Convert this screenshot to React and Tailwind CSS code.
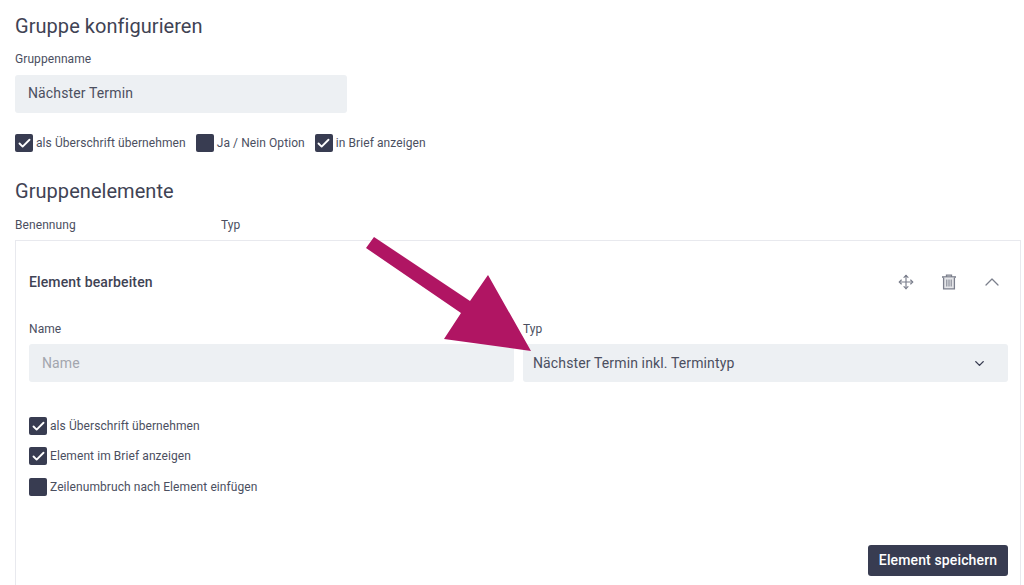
import React from "react";
import { Move, ChevronUp, ChevronDown, Check } from "lucide-react";

const Checkbox = ({ label, checked, className }) => (
  <label className={`flex items-center gap-[3px] ${className || ""}`}>
    <span className="flex h-[18px] w-[18px] items-center justify-center rounded-[2px] bg-[#383c51]">
      {checked && <Check className="h-[15px] w-[15px] text-white" strokeWidth={3} />}
    </span>
    <span className="text-[12px] leading-[18px] tracking-[0.08px] text-[#4b4f5f]">{label}</span>
  </label>
);

const TrashIcon = () => (
  <svg className="h-[18px] w-[18px]" viewBox="0 0 18 18" fill="none" stroke="currentColor" strokeWidth="1.3">
    <path d="M2 4h14" strokeWidth="1.6" />
    <path d="M6.5 4V2.2h5V4" />
    <path d="M3.6 4.5v11.3h10.8V4.5" fill="#e4e5e8" />
    <path d="M6.8 6.5v7M9 6.5v7M11.2 6.5v7" strokeWidth="1" />
  </svg>
);

const App = () => {
  return (
    <div
      className="relative h-[585px] w-[1024px] overflow-hidden bg-white pl-[15px] pr-[3px] pt-[14px] text-[#3f4354]"
      style={{ fontFamily: "Roboto, sans-serif" }}
    >
      <h2 className="text-[20px] leading-[24px] tracking-[0.05px] text-[#3f4354]">Gruppe konfigurieren</h2>
      <div className="mt-[13px] text-[12px] leading-[16px] tracking-[0.08px] text-[#4b4f5f]">Gruppenname</div>
      <div className="mt-[8px] flex h-[38px] w-[332px] items-center rounded-[3px] bg-[#edf0f3] px-[13px] pb-[1px] text-[14px] tracking-[0.13px] text-[#4b4f5f]">
        Nächster Termin
      </div>

      <div className="mt-[21px] flex gap-[10px]">
        <Checkbox label="als Überschrift übernehmen" checked />
        <Checkbox label="Ja / Nein Option" />
        <Checkbox label="in Brief anzeigen" checked />
      </div>

      <h2 className="mt-[27px] text-[20px] leading-[24px] tracking-[0.05px] text-[#3f4354]">Gruppenelemente</h2>
      <div className="mt-[14px] flex text-[12px] leading-[16px] tracking-[0.08px] text-[#4b4f5f]">
        <span className="w-[206px]">Benennung</span>
        <span>Typ</span>
      </div>

      <div className="mt-[7px] h-[400px] border border-[#e8e9ee] pl-[13px] pr-[12px]">
        {/* Card header */}
        <div className="flex h-[81px] items-center justify-between pt-[1px]">
          <h3 className="text-[14px] font-medium tracking-[0.13px] text-[#3f4354]">Element bearbeiten</h3>
          <div className="mr-[4px] flex items-center gap-[19px] text-[#7b7f8c]">
            <span className="flex w-[24px] justify-center">
              <Move className="h-[16px] w-[16px]" strokeWidth={1.75} />
            </span>
            <span className="flex w-[24px] justify-center">
              <TrashIcon />
            </span>
            <ChevronUp className="h-[24px] w-[24px]" strokeWidth={1.25} />
          </div>
        </div>

        <div className="grid grid-cols-2 gap-x-[9px]">
          <div>
            <div className="mb-[8px] text-[12px] leading-[14px] tracking-[0.08px] text-[#4b4f5f]">Name</div>
            <div className="flex h-[38px] items-center rounded-[3px] bg-[#edf0f3] px-[13px] text-[14px] tracking-[0.13px] text-[#a3a6ae]">
              Name
            </div>
          </div>
          <div>
            <div className="mb-[8px] text-[12px] leading-[14px] tracking-[0.08px] text-[#4b4f5f]">Typ</div>
            <div className="flex h-[38px] items-center justify-between rounded-[3px] bg-[#edf0f3] pl-[10px] pr-[21px] text-[14px] tracking-[0.13px] text-[#4b4f5f]">
              Nächster Termin inkl. Termintyp
              <ChevronDown className="h-[15px] w-[15px] text-[#383c51]" strokeWidth={2.25} />
            </div>
          </div>
        </div>

        <div className="mt-[35px] flex flex-col gap-[12px]">
          <Checkbox label="als Überschrift übernehmen" checked />
          <Checkbox label="Element im Brief anzeigen" checked />
          <Checkbox label="Zeilenumbruch nach Element einfügen" className="mt-[1px]" />
        </div>

        <div className="mt-[49px] flex justify-end">
          <button className="h-[31px] w-[140px] rounded-[3px] bg-[#383c51] text-[14px] font-medium tracking-[0.13px] text-white">
            Element speichern
          </button>
        </div>
      </div>

      {/* Annotation arrow */}
      <svg className="absolute left-0 top-0" width="1024" height="585" viewBox="0 0 1024 585">
        <polygon
          points="374,237 366,248 461,313 444,339 531,351 488,275 470,301"
          fill="#b01563"
        />
      </svg>
    </div>
  );
};

export default App;
